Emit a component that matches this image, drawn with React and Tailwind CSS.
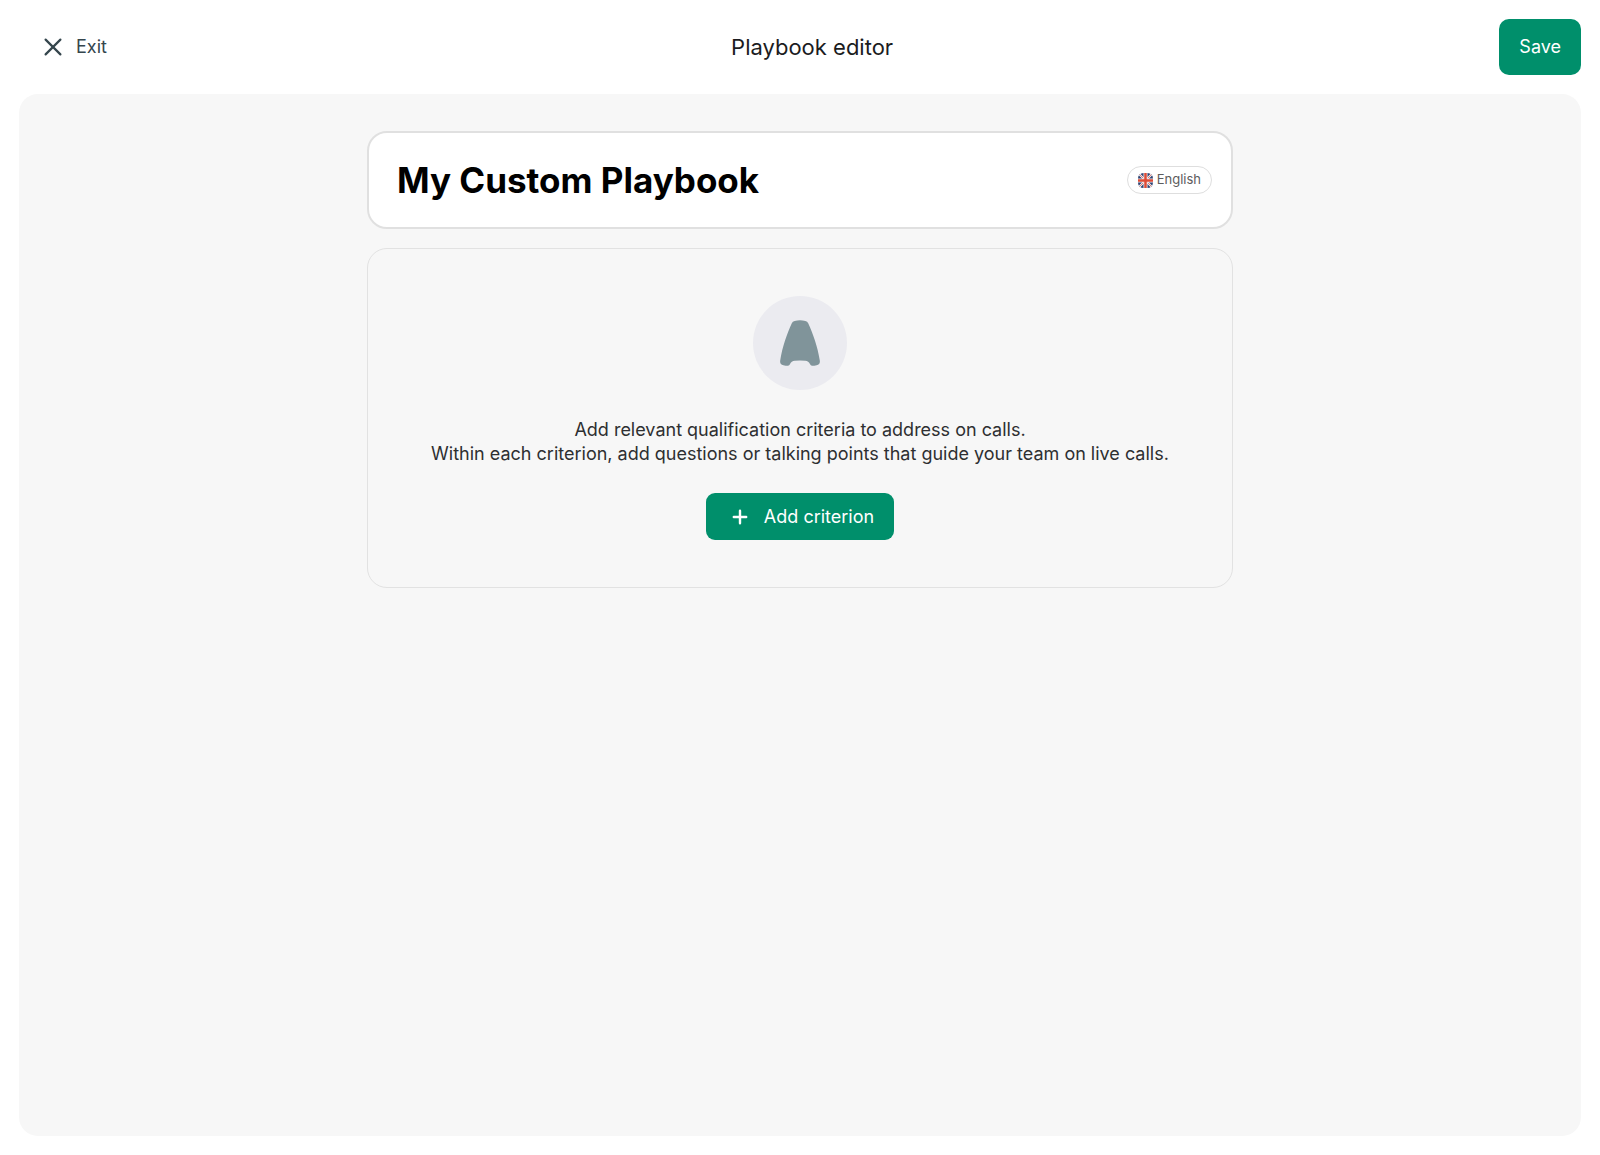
function CloseIcon() {
  return (
    <svg viewBox="0 0 18 18" className="size-[18px]" fill="none" stroke="currentColor" strokeWidth="2.2" strokeLinecap="round" aria-hidden="true">
      <path d="M1.6 1.6 16.4 16.4M16.4 1.6 1.6 16.4" />
    </svg>
  );
}

function PlusIcon() {
  return (
    <svg viewBox="0 0 16 16" className="size-4" fill="none" stroke="currentColor" strokeWidth="2.4" strokeLinecap="round" aria-hidden="true">
      <path d="M8 1.8v12.4M1.8 8h12.4" />
    </svg>
  );
}

function FlagIcon() {
  return (
    <svg viewBox="0 0 30 30" className="size-[15px]" aria-hidden="true">
      <clipPath id="flag-round">
        <rect width="30" height="30" rx="11" />
      </clipPath>
      <g clipPath="url(#flag-round)">
        <rect width="30" height="30" fill="#2f4372" />
        <path d="M0 0 30 30M30 0 0 30" stroke="#f3f3f5" strokeWidth="4.5" />
        <path d="M0 0 30 30M30 0 0 30" stroke="#d9534a" strokeWidth="1.5" />
        <path d="M15 0v30M0 15h30" stroke="#f6f2f2" strokeWidth="8" />
        <path d="M15 0v30M0 15h30" stroke="#dd4a36" strokeWidth="5" />
      </g>
    </svg>
  );
}

function BrandMark() {
  return (
    <svg viewBox="0 0 40 46" className="h-[46px] w-10" fill="#80949a" aria-hidden="true">
      <path d="M14.6 0.9Q20 -0.3 25.4 0.9Q27.4 1.4 28.2 3.2C33 14 37.5 26 39.8 40.5Q40.4 44.6 36.6 45.2Q33.8 45.8 32 45.7Q30.6 45.6 30.1 44.3C29 41.8 27.6 41.1 25.2 40.8Q20 40.3 14.8 40.8C12.4 41.1 11 41.8 9.9 44.3Q9.4 45.6 8 45.7Q6.2 45.8 3.4 45.2Q-0.4 44.6 0.2 40.5C2.5 26 7 14 11.8 3.2Q12.6 1.4 14.6 0.9Z" />
    </svg>
  );
}

export default function App() {
  return (
    <div className="flex min-h-screen flex-col bg-white px-[19px] pb-[19px] font-['Inter',sans-serif] text-[#1b1c1e]">
      <header className="flex items-center justify-between py-[19px]">
        <button type="button" className="flex h-14 items-center gap-[14px] pr-[18px] pl-[25px] text-lg text-[#35464d]">
          <CloseIcon />
          Exit
        </button>
        <h1 className="text-[22px] leading-7">Playbook editor</h1>
        <button type="button" className="h-14 rounded-[10px] bg-[#008f6b] px-5 text-lg text-white">
          Save
        </button>
      </header>

      <main className="flex flex-1 flex-col items-center rounded-[19px] bg-[#f7f7f7] px-4 pt-[37px] pb-10">
        <div className="flex w-full max-w-[866px] flex-col gap-[19px]">
          <section className="flex items-center justify-between gap-6 rounded-[20px] border-2 border-[#e0e0e0] bg-white py-6 pr-[19px] pl-7">
            <input
              type="text"
              aria-label="Playbook name"
              defaultValue="My Custom Playbook"
              className="h-[46px] min-w-0 flex-1 bg-transparent text-[35px] font-bold text-black outline-none"
            />
            <button type="button" className="flex h-7 items-center gap-1 rounded-full border border-[#dedede] px-[10px] text-[13px] text-[#5c5c5c]">
              <FlagIcon />
              English
            </button>
          </section>

          <section className="flex flex-col items-center rounded-[20px] border border-[#e2e2e2] px-6 py-[47px] text-center">
            <div className="flex size-[94px] items-center justify-center rounded-full bg-[#ebebf0]">
              <BrandMark />
            </div>
            <p className="mt-7 text-lg leading-6 text-[#2e2f31]">
              Add relevant qualification criteria to address on calls.
              <br />
              Within each criterion, add questions or talking points that guide your team on live calls.
            </p>
            <button type="button" className="mt-[27px] flex h-[47px] items-center gap-4 rounded-[9px] bg-[#008f6b] pr-5 pl-[26px] text-lg text-white">
              <PlusIcon />
              Add criterion
            </button>
          </section>
        </div>
      </main>
    </div>
  );
}
